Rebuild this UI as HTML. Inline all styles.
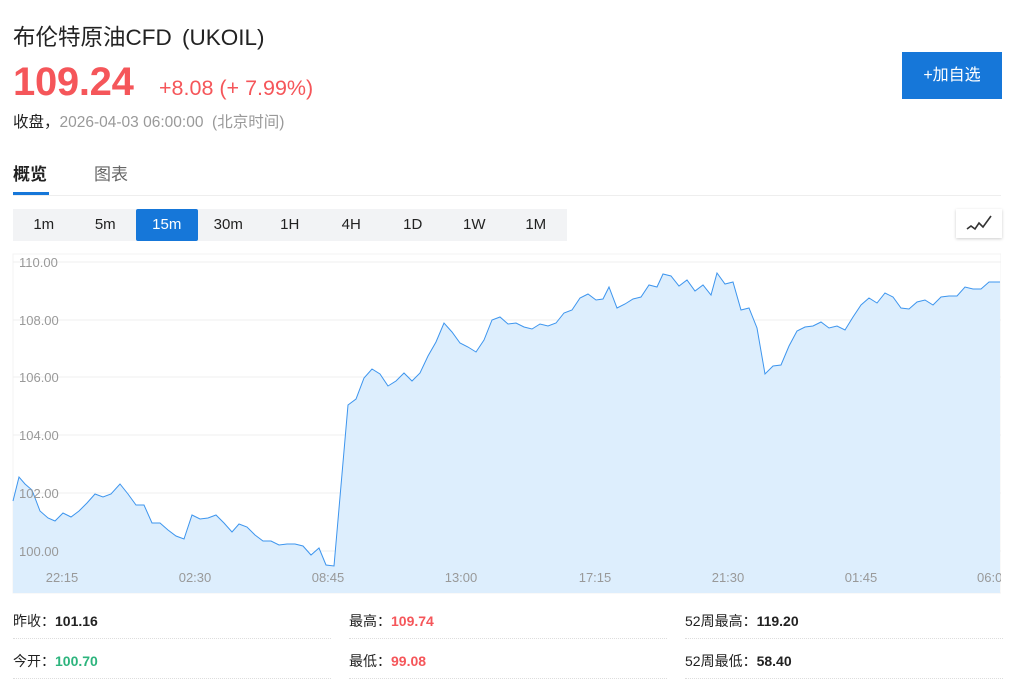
<!DOCTYPE html>
<html><head><meta charset="utf-8"><style>
*{margin:0;padding:0;box-sizing:border-box}
body{width:1024px;height:693px;background:#fff;font-family:"Liberation Sans","Noto Sans CJK SC",sans-serif;position:relative;overflow:hidden;color:#222}
.a{position:absolute;white-space:nowrap}
.tabs{position:absolute;left:13px;top:209px;height:32px;width:554px;background:#f2f3f5;display:flex}
.tabs div{width:61.5px;text-align:center;line-height:32px;font-size:15px;color:#222}
.tabs div.on{background:#1677d9;color:#fff;border-radius:2px}
.st{font-size:14px;font-weight:bold}
.lb{font-size:14px;color:#222}
.ln{position:absolute;height:0;border-top:1px dotted #ddd}
</style></head><body>
<div class="a" style="left:13px;top:20px;font-size:22.5px;color:#222">布伦特原油CFD <span style="margin-left:4px">(UKOIL)</span></div>
<div class="a" style="left:13px;top:60px;font-size:40px;font-weight:bold;color:#f5565a;letter-spacing:-0.3px">109.24</div>
<div class="a" style="left:159px;top:76px;font-size:21.5px;color:#f5565a">+8.08 (+ 7.99%)</div>
<div class="a" style="left:13px;top:110px;font-size:15.5px;color:#222">收盘，<span style="color:#999">2026-04-03 06:00:00 &nbsp;(北京时间)</span></div>
<div class="a" style="left:902px;top:52px;width:100px;height:47px;background:#1677d9;color:#fff;font-size:16px;text-align:center;line-height:47px">+加自选</div>
<div class="a" style="left:13px;top:160px;font-size:17px;font-weight:bold;color:#222">概览</div>
<div class="a" style="left:94px;top:160px;font-size:17px;color:#666">图表</div>
<div class="a" style="left:13px;top:192px;width:36px;height:3px;background:#1677d9"></div>
<div class="a" style="left:13px;top:195px;width:988px;height:1px;background:#eee"></div>
<div class="tabs"><div>1m</div><div>5m</div><div class="on">15m</div><div>30m</div><div>1H</div><div>4H</div><div>1D</div><div>1W</div><div>1M</div></div>
<div class="a" style="left:956px;top:209px;width:46px;height:29px;background:#fff;box-shadow:0 1px 3px rgba(0,0,0,.2)">
<svg width="46" height="29"><polyline points="11,20 15,17 19,20 23,14 27,18 35,7" fill="none" stroke="#333" stroke-width="1.6"/></svg></div>
<svg class="a" style="left:0;top:250px" width="1024" height="345" viewBox="0 250 1024 345">
<rect x="13" y="254" width="988" height="339" fill="#fff" stroke="#f3f3f3"/>
<g stroke="#efefef" stroke-width="1"><line x1="13" x2="1001" y1="262" y2="262"/><line x1="13" x2="1001" y1="320" y2="320"/><line x1="13" x2="1001" y1="377" y2="377"/><line x1="13" x2="1001" y1="435" y2="435"/><line x1="13" x2="1001" y1="493" y2="493"/><line x1="13" x2="1001" y1="551" y2="551"/></g>
<polygon fill="#ddeefd" points="13,593 13,501 19,477 25,484 32,490 40,511 48,518 55,521 63,513 71,517 79,511 87,503 95,494 103,497 111,494 120,484 128,494 136,505 144,505 152,523 160,523 168,530 176,536 184,539 192,515 200,519 208,518 216,515 224,523 232,532 239,524 247,527 255,535 263,541 271,541 279,545 287,544 295,544 303,546 311,555 319,548 326,565 334,566 348,405 356,399 364,378 372,369 380,374 388,386 396,381 404,373 412,381 420,373 428,356 436,342 444,323 452,332 460,343 468,347 476,352 484,340 492,320 500,317 508,324 516,323 524,327 532,329 540,324 548,326 556,323 564,313 572,310 580,298 588,294 596,300 603,299 609,287 617,308 625,304 633,299 641,297 649,285 657,287 663,274 671,276 679,286 687,280 695,291 703,285 711,295 717,273 725,284 733,282 741,310 749,308 757,328 765,374 773,366 781,365 789,346 797,331 805,327 813,326 821,322 829,328 837,326 845,330 853,317 861,305 869,298 877,303 885,293 893,297 901,308 909,309 917,302 925,300 933,305 941,297 949,296 957,296 965,287 973,289 981,289 989,282 1000,282 1000,593"/>
<polyline fill="none" stroke="#3d95ee" stroke-width="1" points="13,501 19,477 25,484 32,490 40,511 48,518 55,521 63,513 71,517 79,511 87,503 95,494 103,497 111,494 120,484 128,494 136,505 144,505 152,523 160,523 168,530 176,536 184,539 192,515 200,519 208,518 216,515 224,523 232,532 239,524 247,527 255,535 263,541 271,541 279,545 287,544 295,544 303,546 311,555 319,548 326,565 334,566 348,405 356,399 364,378 372,369 380,374 388,386 396,381 404,373 412,381 420,373 428,356 436,342 444,323 452,332 460,343 468,347 476,352 484,340 492,320 500,317 508,324 516,323 524,327 532,329 540,324 548,326 556,323 564,313 572,310 580,298 588,294 596,300 603,299 609,287 617,308 625,304 633,299 641,297 649,285 657,287 663,274 671,276 679,286 687,280 695,291 703,285 711,295 717,273 725,284 733,282 741,310 749,308 757,328 765,374 773,366 781,365 789,346 797,331 805,327 813,326 821,322 829,328 837,326 845,330 853,317 861,305 869,298 877,303 885,293 893,297 901,308 909,309 917,302 925,300 933,305 941,297 949,296 957,296 965,287 973,289 981,289 989,282 1000,282"/>
<g font-family="Liberation Sans,sans-serif" font-size="13" fill="#999">
<text x="19" y="267">110.00</text><text x="19" y="325">108.00</text><text x="19" y="382">106.00</text><text x="19" y="440">104.00</text><text x="19" y="498">102.00</text><text x="19" y="556">100.00</text>
<text x="62" y="582" text-anchor="middle">22:15</text><text x="195" y="582" text-anchor="middle">02:30</text><text x="328" y="582" text-anchor="middle">08:45</text><text x="461" y="582" text-anchor="middle">13:00</text><text x="595" y="582" text-anchor="middle">17:15</text><text x="728" y="582" text-anchor="middle">21:30</text><text x="861" y="582" text-anchor="middle">01:45</text><text x="977" y="582">06:00</text></g>
<rect x="1001" y="250" width="23" height="345" fill="#fff"/>
</svg>
<div class="a lb" style="left:13px;top:611px">昨收：<span class="st">101.16</span></div>
<div class="a lb" style="left:13px;top:651px">今开：<span class="st" style="color:#2db47d">100.70</span></div>
<div class="a lb" style="left:349px;top:611px">最高：<span class="st" style="color:#f5565a">109.74</span></div>
<div class="a lb" style="left:349px;top:651px">最低：<span class="st" style="color:#f5565a">99.08</span></div>
<div class="a lb" style="left:685px;top:611px">52周最高：<span class="st">119.20</span></div>
<div class="a lb" style="left:685px;top:651px">52周最低：<span class="st">58.40</span></div>
<div class="ln" style="left:13px;width:318px;top:638px"></div><div class="ln" style="left:349px;width:318px;top:638px"></div><div class="ln" style="left:685px;width:318px;top:638px"></div>
<div class="ln" style="left:13px;width:318px;top:678px"></div><div class="ln" style="left:349px;width:318px;top:678px"></div><div class="ln" style="left:685px;width:318px;top:678px"></div>
</body></html>
